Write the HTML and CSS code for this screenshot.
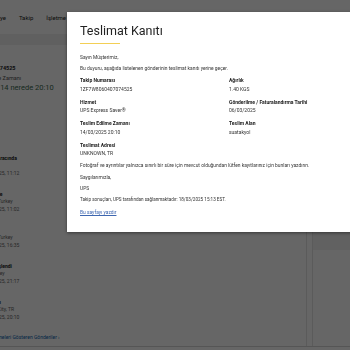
FILE: index.html
```html
<!DOCTYPE html>
<html lang="tr">
<head>
<meta charset="utf-8">
<title>Teslimat Kanıtı</title>
<link rel="stylesheet" href="styles.css">
</head>
<body>
<div class="page">
  <header class="site-header">
    <nav class="nav">
      <span>Gönderiye</span><span>Takip</span><span>İşletme</span><span>Destek</span>
    </nav>
  </header>
  <div class="band"></div>
  <main class="main">
    <section class="track">
      <div class="summary">
        <div class="tn">1ZF7W8060407074525</div>
        <div class="sub">Teslim Edilme Zamanı</div>
        <div class="when">Perşembe, 14 nerede 20:10</div>
      </div>
      <ol class="timeline">
        <li><div class="st">Dağıtım Aracında</div><div class="loc">Ist</div><div class="dt">14/03/2025, 11:12</div></li>
        <li><div class="st">Yerel Birde</div><div class="loc">Istanbul, Turkey</div><div class="dt">14/03/2025, 11:02</div></li>
        <li><div class="st">İşlendi</div><div class="loc">Istanbul, Turkey</div><div class="dt">13/03/2025, 16:35</div></li>
        <li><div class="st">Gönderi İşlendi</div><div class="loc">Köln, Turkey</div><div class="dt">12/03/2025, 21:17</div></li>
        <li><div class="st">Hazırlandı</div><div class="loc">Cologne City, TR</div><div class="dt">06/03/2025, 20:10</div></li>
      </ol>
      <a class="more" href="#">Tüm Güncellemeleri Gösteren Gönderiler ›</a>
    </section>
    <aside class="side">
      <div class="side-panel"><div class="side-head"></div></div>
    </aside>
  </main>
  <footer class="foot"></footer>
</div>
<div class="overlay"></div>
<div class="modal">
  <h1 class="title">Teslimat Kanıtı</h1>
  <div class="bar"></div>
  <p class="greet">Sayın Müşterimiz,</p>
  <p>Bu duyuru, aşağıda listelenen gönderinin teslimat kanıtı yerine geçer.</p>
  <div class="fields">
    <div class="field"><div class="lbl">Takip Numarası</div><div class="val">1ZF7W8060407074525</div></div>
    <div class="field"><div class="lbl">Ağırlık</div><div class="val">1.40 KGS</div></div>
    <div class="field"><div class="lbl">Hizmet</div><div class="val">UPS Express Saver®</div></div>
    <div class="field"><div class="lbl">Gönderilme / Faturalandırma Tarihi</div><div class="val">06/03/2025</div></div>
    <div class="field"><div class="lbl">Teslim Edilme Zamanı</div><div class="val">14/03/2025 20:10</div></div>
    <div class="field"><div class="lbl">Teslim Alan</div><div class="val">suatakyol</div></div>
    <div class="field"><div class="lbl">Teslimat Adresi</div><div class="val">UNKNOWN, TR</div></div>
  </div>
  <p class="gap">Fotoğraf ve ayrıntılar yalnızca sınırlı bir süre için mevcut olduğundan lütfen kayıtlarınız için bunları yazdırın.</p>
  <p class="gap">Saygılarımızla,</p>
  <p class="gap">UPS</p>
  <p class="gap tight">Takip sonuçları, UPS tarafından sağlanmaktadır: 18/03/2025 15:13 EST.</p>
  <p class="gap link-row"><a class="print" href="#">Bu sayfayı yazdır</a></p>
</div>
</body>
</html>
```
FILE: styles.css
```css
html, body {
  margin: 0;
  padding: 0;
  width: 350px;
  height: 350px;
  overflow: hidden;
}
body {
  font-family: Roboto, "Liberation Sans", sans-serif;
  background: #fff;
  color: #222;
}
.page {
  width: 350px;
  height: 350px;
  background: #fff;
}
.site-header {
  height: 17px;
  padding-top: 13px;
}
.nav {
  display: flex;
  gap: 13px;
  margin-left: -21px;
  font-size: 6px;
  line-height: 10px;
  color: #222;
}
.band {
  margin-top: 4px;
  height: 11px;
  background: #f0f0f0;
}
.main {
  display: flex;
}
.track {
  width: 306px;
  flex: 0 0 306px;
  padding-bottom: 5px;
}
.summary {
  padding-top: 18.5px;
}
.tn {
  margin-left: -43px;
  font-size: 5.5px;
  font-weight: 700;
  line-height: 9px;
}
.sub {
  margin-left: -33px;
  font-size: 5.5px;
  line-height: 10px;
  color: #555;
}
.when {
  margin-left: -37px;
  font-size: 7.5px;
  line-height: 10px;
  color: #3d6b50;
}
.timeline {
  list-style: none;
  margin: 62px 0 0 -22px;
  padding: 0;
  display: flex;
  flex-direction: column;
  gap: 14px;
  font-size: 5px;
}
.timeline li {
  height: 22px;
}
.st {
  font-weight: 700;
  line-height: 7px;
  color: #222;
}
.loc {
  line-height: 7px;
  color: #666;
}
.dt {
  line-height: 8px;
  color: #666;
}
.more {
  display: block;
  margin: 12.5px 0 0 -33px;
  font-size: 5px;
  line-height: 8px;
  color: #0a5fb0;
  text-decoration: none;
  white-space: nowrap;
}
.side {
  flex: 1;
  border-left: 1px solid #e3e3e3;
  padding-left: 5px;
}
.side-panel {
  height: 100%;
  border-left: 1px solid #e3e3e3;
}
.side-head {
  height: 205px;
  background: #f2f2f2;
}
.foot {
  border-top: 1px solid #d5d5d5;
}
.overlay {
  position: fixed;
  inset: 0;
  background: rgba(0, 0, 0, 0.6);
}
.modal {
  position: absolute;
  left: 67px;
  top: 12px;
  width: 300px;
  padding: 11px 0 16px 13px;
  background: #fff;
  box-shadow: 0 1px 3px rgba(0, 0, 0, 0.45);
  color: #333;
}
.title {
  margin: 0;
  font-size: 12.5px;
  font-weight: 400;
  line-height: 16px;
  color: #222;
}
.bar {
  width: 40px;
  height: 1.5px;
  margin-top: 3.5px;
  background: #f3cf55;
}
.modal p {
  margin: 0;
  font-size: 4.9px;
  line-height: 8px;
}
.modal .greet {
  margin-top: 9.3px;
  margin-bottom: 3px;
}
.fields {
  display: grid;
  grid-template-columns: 149px 1fr;
  row-gap: 4.5px;
  margin-top: 4.2px;
  font-size: 5px;
}
.lbl {
  font-weight: 700;
  line-height: 8.5px;
  color: #222;
}
.val {
  line-height: 8.5px;
  color: #333;
}
.modal .gap {
  margin-top: 3.4px;
}
.modal .tight {
  font-size: 4.6px;
}
.modal .link-row {
  margin-top: 4px;
}
.print {
  color: #3d66b0;
  text-decoration: underline;
}
```
